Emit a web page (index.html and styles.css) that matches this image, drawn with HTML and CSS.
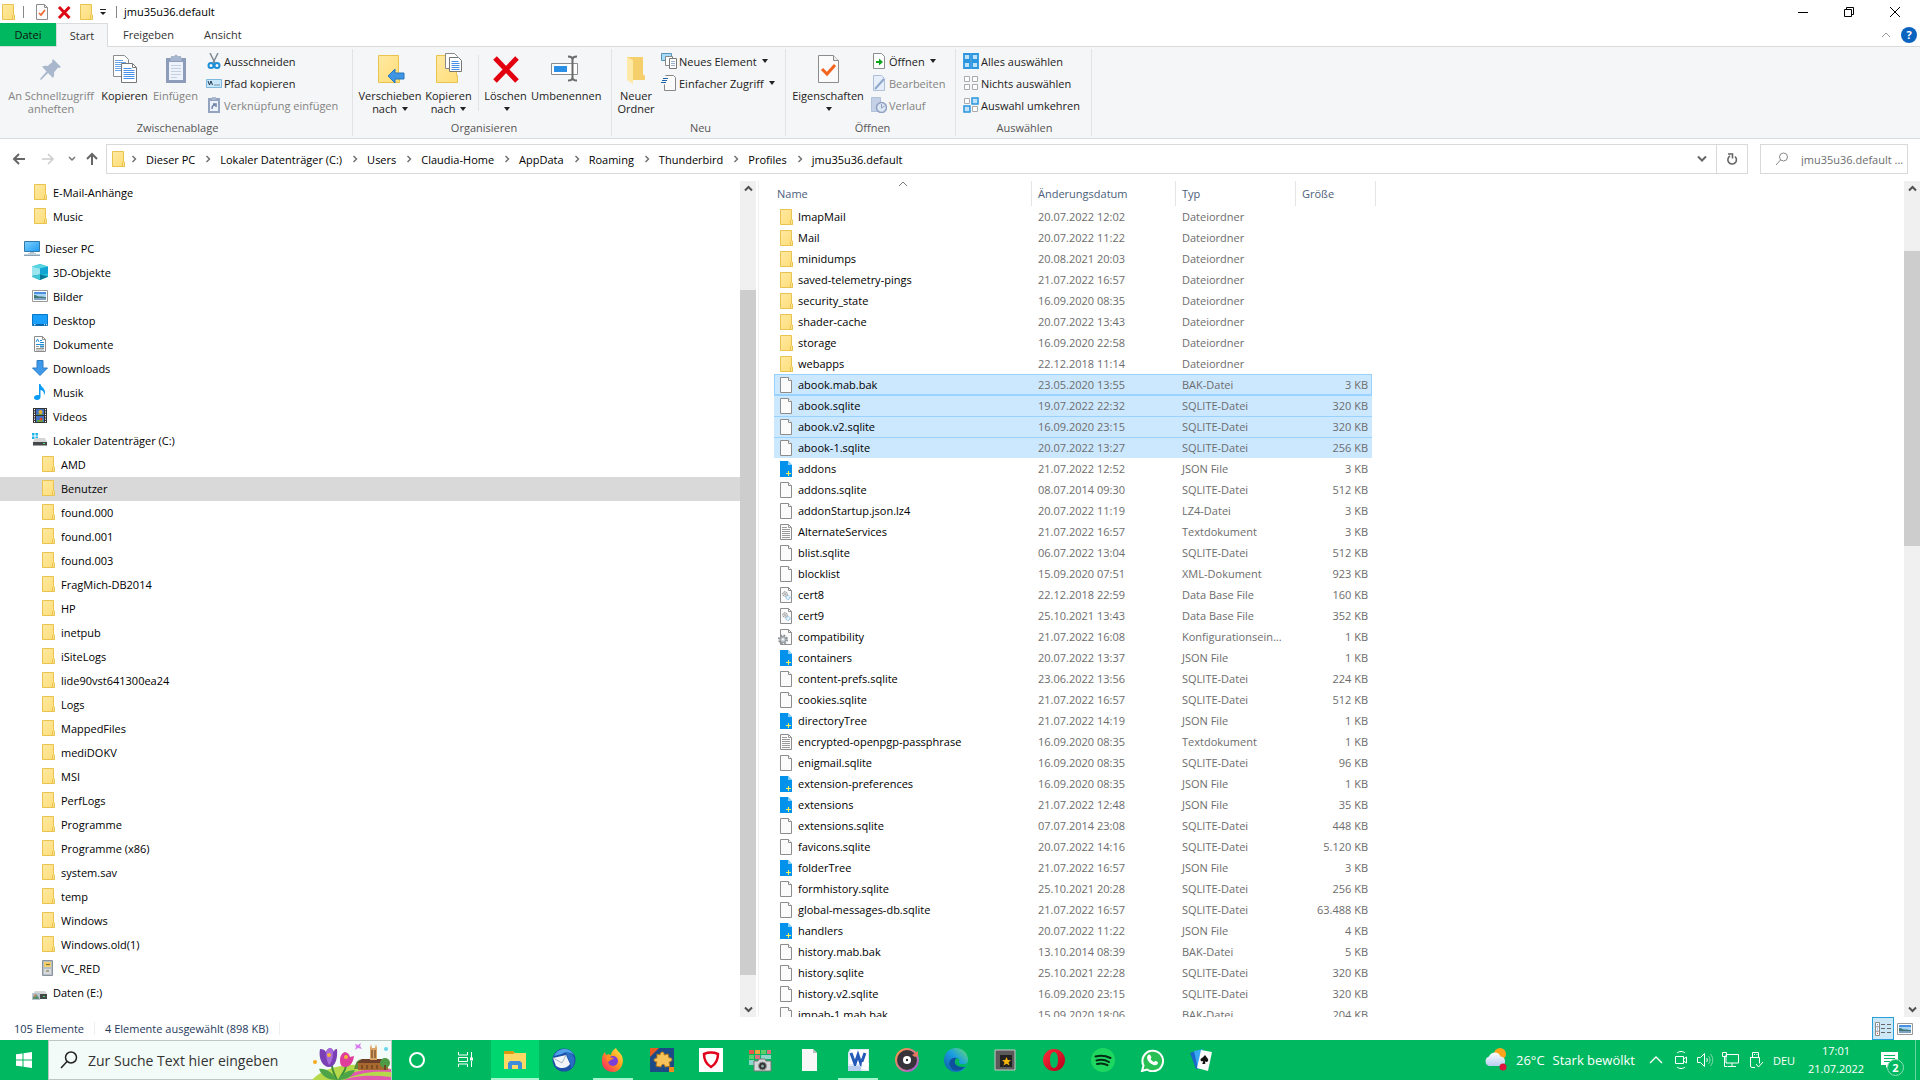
FILE: index.html
```html
<!DOCTYPE html>
<html lang="de">
<head>
  <meta charset="UTF-8">
  <meta name="viewport" content="width=device-width, initial-scale=1.0">
  <title>jmu35u36.default</title>
  <link rel="stylesheet" href="styles.css">
</head>
<body>

  <!-- Icon-Vorrat -->
  <svg class="vorrat" width="0" height="0" aria-hidden="true">
    <defs>
      <linearGradient id="gOrdner" x1="0" y1="0" x2="1" y2="1"><stop offset="0" stop-color="#ffe9a2"/><stop offset="1" stop-color="#ffdd78"/></linearGradient>
      <linearGradient id="gBlau" x1="0" y1="0" x2="1" y2="1"><stop offset="0" stop-color="#7fd0ff"/><stop offset="1" stop-color="#1e9cf5"/></linearGradient>
      <linearGradient id="gEdge" x1="0" y1="1" x2="1" y2="0"><stop offset="0" stop-color="#0c59a4"/><stop offset="0.55" stop-color="#1b9de2"/><stop offset="1" stop-color="#6be06a"/></linearGradient>
      <linearGradient id="gFox" x1="1" y1="0" x2="0" y2="1"><stop offset="0" stop-color="#fff14a"/><stop offset="0.45" stop-color="#ff9a1f"/><stop offset="1" stop-color="#f5156c"/></linearGradient>
      <linearGradient id="gDisc" x1="0" y1="0" x2="1" y2="1"><stop offset="0" stop-color="#ff9a3c"/><stop offset="1" stop-color="#a05adf"/></linearGradient>
      <linearGradient id="gOpera" x1="0" y1="0" x2="1" y2="1"><stop offset="0" stop-color="#ff2a3a"/><stop offset="1" stop-color="#b3001b"/></linearGradient>
      <linearGradient id="gWolke" x1="0" y1="0" x2="0" y2="1"><stop offset="0" stop-color="#ffffff"/><stop offset="1" stop-color="#b9cdf0"/></linearGradient>
    </defs>

    <symbol id="ordner" viewBox="0 0 16 16"><path d="M2.500.500h11v10.500h.9v4.500h-11.900z" fill="url(#gOrdner)" stroke="#e8c34f"/><path d="M12.500 15.500v-4.200l1-1 1 1v4.200z" fill="#ffe48d" stroke="#e8c34f"/></symbol>
    <symbol id="datei" viewBox="0 0 16 16"><path d="M2.500.500h8l3 3v12h-11z" fill="#fbfbfb" stroke="#8d8d8d"/><path d="M10.500.500v3h3" fill="#fff" stroke="#8d8d8d"/></symbol>
    <symbol id="text" viewBox="0 0 16 16"><path d="M2.500.500h8l3 3v12h-11z" fill="#fbfbfb" stroke="#8d8d8d"/><path d="M10.500.500v3h3M4 5.500h8M4 7.500h8M4 9.500h8M4 11.500h8M4 13.500h8M4 3.500h5" fill="none" stroke="#9b9b9b"/></symbol>
    <symbol id="json" viewBox="0 0 16 16"><path d="M2 0h8l4 4v12h-12z" fill="#0292ec"/><path d="M10 0v4h4z" fill="#8fd0f8"/><path d="M10.500 10v5M8 12.500h5" stroke="#fff35c" fill="none"/></symbol>
    <symbol id="db" viewBox="0 0 16 16"><path d="M2.500.500h8l3 3v12h-11z" fill="#fbfbfb" stroke="#8d8d8d"/><path d="M10.500.500v3h3" fill="none" stroke="#8d8d8d"/><circle cx="7" cy="7" r="2.300" fill="#e5e5e5" stroke="#888" stroke-dasharray="1.500 .6"/><circle cx="7" cy="7" r=".8" fill="#888"/><circle cx="10" cy="10.500" r="2" fill="#e1f2fd" stroke="#7fb8dc" stroke-dasharray="1.300 .5"/></symbol>
    <symbol id="konfig" viewBox="0 0 16 16"><path d="M2.500.500h8l3 3v12h-11z" fill="#fbfbfb" stroke="#8d8d8d"/><path d="M10.500.500v3h3" fill="none" stroke="#8d8d8d"/><circle cx="5" cy="10.500" r="4" fill="none" stroke="#8a9197" stroke-width="2" stroke-dasharray="1.800 1.340"/><circle cx="5" cy="10.500" r="3" fill="#c3c9cd" stroke="#8a9197"/><circle cx="5" cy="10.500" r="1" fill="#fff"/></symbol>
    <symbol id="pc" viewBox="0 0 16 16"><path d="M.500 1.500h15v10h-15z" fill="url(#gBlau)" stroke="#3579a8"/><path d="M6 12h4v1h2v.8H4V13h2z" fill="#a9c0d0"/><path d="M0 14.500h16v1.500H0z" fill="#8ba3b5"/></symbol>
    <symbol id="wuerfel" viewBox="0 0 16 16"><path d="M8 0l8 2.500v10.500l-8 3-8-3V2.500z" fill="#25c0d5"/><path d="M0 2.500l8 2v11.500l-8-3z" fill="#9be6ee"/><path d="M8 0l8 2.500-8 2-8-2z" fill="#58d4e3"/><path d="M8 4.500l8-2v7l-8 1.500z" fill="#12a5d3"/><path d="M0 12l8-1.500 8 2-8 3.500z" fill="#0a7594"/><path d="M0 12l8-1.500v5.500z" fill="#3fc9d7"/></symbol>
    <symbol id="bild" viewBox="0 0 16 16"><path d="M.500 2.500h15v11H.500z" fill="#fff" stroke="#999"/><path d="M2 4h12v8H2z" fill="#a9d3f7"/><path d="M2 4h12v2H2z" fill="#4a91e2"/><path d="M2 7c3 0 3 1.500 6 1.500s3 .5 6 .5v3H2z" fill="#417a76"/><path d="M2 10h12v2H2z" fill="#7ba2c2"/></symbol>
    <symbol id="desktop" viewBox="0 0 16 16"><path d="M.500 2.500h15v11H.500z" fill="#1aa0fb" stroke="#0778c8"/><path d="M1 12h14v1.500H1z" fill="#0b62ad"/><path d="M2 12.700h1.500M12 12.700h1M14 12.700h1" stroke="#fff"/></symbol>
    <symbol id="dokument" viewBox="0 0 16 16"><path d="M2.500.500h8l3 3v12h-11z" fill="#fff" stroke="#8d8d8d"/><path d="M10.500.500v3h3" fill="none" stroke="#8d8d8d"/><path d="M4 6l1.500-3L7 6M8 4.500h2M8 6.500h4M4 8.500h8" stroke="#1e90e0" fill="none"/><path d="M4 10.500h3M4 12.500h8M4 14h8" stroke="#999"/><path d="M8 9.500h4v2H8z" fill="#3a8fb7"/></symbol>
    <symbol id="download" viewBox="0 0 16 16"><path d="M5 .5h6v7.500h4.500L8 15.500.500 8H5z" fill="#3e9ae8" stroke="#2f7cc4"/></symbol>
    <symbol id="musik" viewBox="0 0 16 16"><path d="M7 0h1.500c.3 3 4.500 4 4.500 8 0 1.500-.5 2.500-1 3 .2-3-1-4.500-3.500-5v7c0 2-1.600 3-3.500 3s-3-1-3-2.400C2 12 3.500 11 5.500 11c.6 0 1 .1 1.500.3z" fill="#0a9bf5"/></symbol>
    <symbol id="video" viewBox="0 0 16 16"><path d="M1 0h14v15H1z" fill="#333"/><path d="M2.500 1v14M13.500 1v14" stroke="#fff" stroke-dasharray="1.200 1.200"/><path d="M4 1h8v6H4zM4 8h8v6H4z" fill="#3f71c8"/><circle cx="8.500" cy="4" r="2" fill="#e9b32c"/><path d="M5 6h6v1H5zM5 12h6v2H5z" fill="#6aa347"/><circle cx="9" cy="11" r="1.500" fill="#d84a2b"/></symbol>
    <symbol id="laufwerk" viewBox="0 0 16 16"><path d="M0 1h2.500v2.500H0zM3.500 1H6v2.500H3.500zM0 4.500h2.500V7H0zM3.500 4.500H6V7H3.500z" fill="#1ab2ea"/><path d="M3 6h10l2 4H1z" fill="#d4d6d8"/><path d="M1 10h14v3.500H1z" fill="#44484b"/><path d="M11 11.500h2" stroke="#4fe06a"/></symbol>
    <symbol id="daten" viewBox="0 0 16 16"><path d="M3 7h10l2 3H1z" fill="#d4d6d8"/><path d="M7 10h8v5H7z" fill="#44484b"/><path d="M0 9h8v7H0z" fill="#b9c6cf"/><path d="M1 13l3-3 3 4v1H1z" fill="#5b8c6f"/><circle cx="3" cy="11.500" r="1.300" fill="#c58f6b"/><path d="M11 12.500h2" stroke="#4fe06a"/></symbol>
    <symbol id="archiv" viewBox="0 0 16 16"><path d="M2.500.500h10v15h-10z" fill="#b7bec6" stroke="#8a929b"/><path d="M4 2h7v5H4z" fill="#f3cf68"/><path d="M4 9h7v5H4z" fill="#d5dade"/><path d="M6 4.500h4M6 11h3" stroke="#7c6a31"/></symbol>
    <symbol id="scroll-auf" viewBox="0 0 16 16"><path d="M5 9.500l3.500-3.500L12 9.500" fill="none" stroke="#505050" stroke-width="2"/></symbol>
    <symbol id="scroll-ab" viewBox="0 0 16 16"><path d="M5 6.500L8.500 10 12 6.500" fill="none" stroke="#505050" stroke-width="2"/></symbol>
    <symbol id="pfeil" viewBox="0 0 8 8"><path d="M2.500 1l3 3-3 3" fill="none" stroke="#6d6d6d" stroke-width="1.400"/></symbol>
  </svg>

  <!-- Titelleiste -->
  <header class="titelleiste">
    <svg class="icon"><use href="#ordner"/></svg>
    <span class="strich"></span>
    <button class="schnell" aria-label="Eigenschaften"><svg class="icon" viewBox="0 0 16 16"><path d="M2.500.500h8l3 3v12h-11z" fill="#fbfbfb" stroke="#8d8d8d"/><path d="M10.500.500v3h3" fill="none" stroke="#8d8d8d"/><path d="M5 9l2 2 4-5" fill="none" stroke="#f0642b" stroke-width="1.600"/></svg></button>
    <button class="schnell" aria-label="Löschen"><svg class="icon" viewBox="0 0 16 16"><path d="M3 3l10.500 11M13.500 3L3 14" stroke="#dc0a14" stroke-width="3"/></svg></button>
    <button class="schnell" aria-label="Neuer Ordner"><svg class="icon"><use href="#ordner"/></svg></button>
    <button class="schnell schmal" aria-label="Anpassen"><svg width="8" height="8"><path d="M1 1.500h6" stroke="#222"/><path d="M1 4h6L4 7z" fill="#222"/></svg></button>
    <span class="strich"></span>
    <h1>jmu35u36.default</h1>
    <div class="fenster">
      <button aria-label="Minimieren"><svg width="10" height="10"><path d="M0 5.500h10" stroke="#000"/></svg></button>
      <button aria-label="Verkleinern"><svg width="10" height="10"><path d="M.500 2.500h7v7h-7zM2.500 2.500v-2h7v7h-2" fill="none" stroke="#000"/></svg></button>
      <button aria-label="Schließen"><svg width="10" height="10"><path d="M0 0l10 10M10 0L0 10" stroke="#000"/></svg></button>
    </div>
  </header>

  <!-- Register -->
  <nav class="register">
    <button class="datei">Datei</button>
    <button class="aktiv">Start</button>
    <button>Freigeben</button>
    <button>Ansicht</button>
    <div class="hilfe">
      <svg width="10" height="10"><path d="M1 7l4-4 4 4" fill="none" stroke="#999"/></svg>
      <button aria-label="Hilfe">?</button>
    </div>
  </nav>

  <!-- Menüband -->
  <section class="band">
    <div class="gruppe ablage">
      <div class="inhalt">
        <button class="gross breit" disabled>
          <svg viewBox="0 0 32 32"><path d="M18 6l8 8-2 1-1-.5-4 5c.5 2 0 4-1 5.500l-5-5-7 7-1-1 6.500-7.500-4.500-5c2-1 4-1 5.500-.5l5-4-.5-1z" fill="#a9b8cc"/></svg>
          An Schnellzugriff<br>anheften
        </button>
        <button class="gross">
          <svg viewBox="0 0 32 32"><path d="M4.500 2.500h11l4 4v17h-15z" fill="#fff" stroke="#8c8c8c"/><path d="M6 7.500h8M6 9.500h11M6 11.500h11M6 13.500h6M6 15.500h6M6 17.500h6" stroke="#6aa5ea"/><path d="M12.500 10.500h11l4 4v15h-15z" fill="#fff" stroke="#777"/><path d="M23.500 10.500v4h4" fill="none" stroke="#777"/><path d="M14.500 15.500h8M14.500 17.500h11M14.500 19.500h11M14.500 21.500h11M14.500 23.500h11M14.500 25.500h11" stroke="#4a90e8"/></svg>
          Kopieren
        </button>
        <button class="gross" disabled>
          <svg viewBox="0 0 32 32"><path d="M6 5h20v25H6z" fill="#8c9cba"/><path d="M9 9h14v18H9z" fill="#eef3fb"/><path d="M11 3h3.500a1.500 1.500 0 013 0H21l1 5H10z" fill="#a6b4cd"/><path d="M11 12.500h10M11 15.500h10M11 18.500h10M11 21.500h10M11 24.500h6" stroke="#c3cfe3"/></svg>
          Einfügen
        </button>
        <div class="spalte">
          <button class="klein"><svg class="icon" viewBox="0 0 16 16"><path d="M4 0l5 10M12 0L7 10" stroke="#7d8a96" stroke-width="1.500"/><circle cx="5" cy="12.500" r="2.500" fill="none" stroke="#1d8fd8" stroke-width="2"/><circle cx="11" cy="12.500" r="2.500" fill="none" stroke="#1d8fd8" stroke-width="2"/></svg>Ausschneiden</button>
          <button class="klein"><svg class="icon" viewBox="0 0 16 16"><path d="M.500 4.500h15v8H.500z" fill="#c9e7fb" stroke="#7db8de"/><path d="M2 6l1.500 4L5 6l1.500 4M8.500 10h1M10.500 10h1M12.500 10h1" stroke="#23384c" fill="none"/></svg>Pfad kopieren</button>
          <button class="klein" disabled><svg class="icon" viewBox="0 0 16 16"><path d="M2 1h12v15H2z" fill="#93a3c0"/><path d="M4 4h8v10H4z" fill="#edf2fa"/><path d="M6 0h4v3H6z" fill="#a9b7cf"/><path d="M6 12c0-3 1-4 3-4M7 7h3v3" stroke="#6d82a8" stroke-width="1.500" fill="none"/></svg>Verknüpfung einfügen</button>
        </div>
      </div>
      <p>Zwischenablage</p>
    </div>

    <div class="gruppe organisieren">
      <div class="inhalt">
        <button class="gross mittel">
          <svg viewBox="0 0 32 32"><path d="M4.500 2.500h20v20h1v7h-21z" fill="url(#gOrdner)" stroke="#e8c34f"/><path d="M14 23l7-7v4h9v6h-9v4z" fill="#3e96e4" stroke="#2674bd"/></svg>
          Verschieben<br>nach <i class="dreieck"></i>
        </button>
        <button class="gross">
          <svg viewBox="0 0 32 32"><path d="M3.500 2.500h20v20h1v7h-21z" fill="url(#gOrdner)" stroke="#e8c34f"/><path d="M12.500.500h9l3 3v12h-12z" fill="#fff" stroke="#888"/><path d="M16.500 4.500h9l3 3v11h-12z" fill="#fff" stroke="#777"/><path d="M18.500 8.500h7M18.500 10.500h8M18.500 12.500h8M18.500 14.500h8M18.500 16.500h8" stroke="#4a90e8"/></svg>
          Kopieren<br>nach <i class="dreieck"></i>
        </button>
        <span class="trenner"></span>
        <button class="gross">
          <svg viewBox="0 0 32 32"><path d="M5 5l22 23M27 5L5 28" stroke="#e3000f" stroke-width="5"/></svg>
          Löschen<br><i class="dreieck"></i>
        </button>
        <button class="gross mittel">
          <svg viewBox="0 0 32 32"><path d="M3.500 10.500h26v11h-26z" fill="#fff" stroke="#8c8c8c"/><path d="M6 13h13v6H6z" fill="#2b8fe6"/><path d="M20 3.500c3 0 4.500 1 4.500 3v18c0 2-1.500 3-4.500 3M29 3.500c-3 0-4.500 1-4.500 3v18c0 2 1.500 3 4.500 3" fill="none" stroke="#6b6b6b" stroke-width="2"/></svg>
          Umbenennen
        </button>
      </div>
      <p>Organisieren</p>
    </div>

    <div class="gruppe neu">
      <div class="inhalt">
        <button class="gross schlank">
          <svg viewBox="0 0 32 32"><path d="M7 4h16v17l2 2v4H7z" fill="#f6cf6d"/><path d="M7 4l6 3v24l-6-4z" fill="#ffe9a6"/></svg>
          Neuer<br>Ordner
        </button>
        <div class="spalte">
          <button class="klein"><svg class="icon" viewBox="0 0 16 16"><path d="M.500.500h10v7H.500z" fill="#a8dbf7" stroke="#5a93b5"/><path d="M4.500 3.500h7v9h-7z" fill="#fff" stroke="#888"/><path d="M8.500 5.500h7v10h-7z" fill="#fff" stroke="#777"/><path d="M10 8.500h4M10 10.500h4M10 12.500h4" stroke="#9aaed0"/></svg>Neues Element <i class="dreieck"></i></button>
          <button class="klein"><svg class="icon" viewBox="0 0 16 16"><path d="M4.500.500h8l2 2v13h-11v-6" fill="#fbfbfb" stroke="#888"/><path d="M2 3.500h5M1 5.500h5M0 7.500h5" stroke="#1d66ad"/></svg>Einfacher Zugriff <i class="dreieck"></i></button>
        </div>
      </div>
      <p>Neu</p>
    </div>

    <div class="gruppe oeffnen">
      <div class="inhalt">
        <button class="gross mittel">
          <svg viewBox="0 0 32 32"><path d="M6.500 2.500h15l5 5v22h-20z" fill="#fbfbfb" stroke="#8c8c8c"/><path d="M21.500 2.500v5h5" fill="#eee" stroke="#8c8c8c"/><path d="M10 16l5 5 8-9" fill="none" stroke="#f4641e" stroke-width="3"/></svg>
          Eigenschaften<br><i class="dreieck"></i>
        </button>
        <div class="spalte">
          <button class="klein"><svg class="icon" viewBox="0 0 16 16"><path d="M2.500.500h8l3 3v12h-11z" fill="#fff" stroke="#8d8d8d"/><path d="M5 8h3V5.500L12 9l-4 3.500V10H5z" fill="#10a51f"/></svg>Öffnen <i class="dreieck"></i></button>
          <button class="klein" disabled><svg class="icon" viewBox="0 0 16 16"><path d="M2.500.500h8l3 3v12h-11z" fill="#e6eef9" stroke="#aebfd9"/><path d="M4 14l9-10" stroke="#8fa7cc" stroke-width="2"/></svg>Bearbeiten</button>
          <button class="klein" disabled><svg class="icon" viewBox="0 0 16 16"><path d="M.500.500h9v14h-9z" fill="#c3d0e6" stroke="#b3c2db"/><circle cx="10.500" cy="10.500" r="5" fill="#dde6f3" stroke="#8fa0c0" stroke-width="1.500"/><path d="M10.500 7v4l3-2" fill="none" stroke="#8fa0c0"/></svg>Verlauf</button>
        </div>
      </div>
      <p>Öffnen</p>
    </div>

    <div class="gruppe auswaehlen">
      <div class="inhalt">
        <div class="spalte">
          <button class="klein"><svg class="icon" viewBox="0 0 16 16"><path d="M1 1h6v6H1zM9 1h6v6H9zM1 9h6v6H1zM9 9h6v6H9z" fill="#bfe3fb" stroke="#2b95e0" stroke-width="1.800"/></svg>Alles auswählen</button>
          <button class="klein"><svg class="icon" viewBox="0 0 16 16"><path d="M1.500 1.500h5v5h-5zM9.500 1.500h5v5h-5zM1.500 9.500h5v5h-5zM9.500 9.500h5v5h-5z" fill="#fff" stroke="#aaa"/></svg>Nichts auswählen</button>
          <button class="klein"><svg class="icon" viewBox="0 0 16 16"><path d="M1.500 1.500h5v5h-5zM9.500 9.500h5v5h-5z" fill="#fff" stroke="#aaa"/><path d="M9 1h6v6H9zM1 9h6v6H1z" fill="#bfe3fb" stroke="#2b95e0" stroke-width="1.500"/></svg>Auswahl umkehren</button>
        </div>
      </div>
      <p>Auswählen</p>
    </div>
  </section>

  <!-- Adressleiste -->
  <div class="adresse">
    <div class="richtung">
      <button aria-label="Zurück"><svg width="14" height="14"><path d="M13 7H2M7 2L2 7l5 5" fill="none" stroke="#666" stroke-width="2"/></svg></button>
      <button aria-label="Vorwärts" disabled><svg width="14" height="14"><path d="M1 7h11M7 2l5 5-5 5" fill="none" stroke="#ccc" stroke-width="1.500"/></svg></button>
      <button class="schmal" aria-label="Verlauf"><svg width="8" height="8"><path d="M1 2l3 3 3-3" fill="none" stroke="#777" stroke-width="1.500"/></svg></button>
      <button class="schmal" aria-label="Nach oben"><svg width="14" height="14"><path d="M7 13V2M2 7l5-5 5 5" fill="none" stroke="#666" stroke-width="2"/></svg></button>
    </div>
    <div class="pfad">
      <svg class="icon"><use href="#ordner"/></svg>
      <ol id="pfad"></ol>
      <button aria-label="Frühere Orte"><svg width="10" height="8"><path d="M1 1.500l4 4 4-4" fill="none" stroke="#666" stroke-width="2"/></svg></button>
      <button class="neuladen" aria-label="Aktualisieren"><svg width="12" height="13"><path d="M9 3.500a4.300 4.300 0 11-5-.5" fill="none" stroke="#666" stroke-width="1.600"/><path d="M2 1h4.500v4.500" fill="none" stroke="#666" stroke-width="1.600"/></svg></button>
    </div>
    <label class="suche">
      <svg width="14" height="14"><circle cx="8.500" cy="5" r="4" fill="none" stroke="#888"/><path d="M5.500 8L1 13" stroke="#888"/></svg>
      <input type="text" placeholder="jmu35u36.default ..." aria-label="Durchsuchen">
    </label>
  </div>

  <!-- Ordnerbaum und Dateiliste -->
  <main class="ansicht">
    <ul class="baum" id="baum"></ul>
    <div class="leiste leiste-baum">
      <svg class="icon"><use href="#scroll-auf"/></svg>
      <div class="vor"></div><div class="griff"></div><div class="nach"></div>
      <svg class="icon"><use href="#scroll-ab"/></svg>
    </div>

    <div class="liste">
      <table>
        <thead>
          <tr>
            <th class="name">Name<svg class="sortierung" width="10" height="6"><path d="M1 5l4-4 4 4" fill="none" stroke="#777"/></svg></th>
            <th class="datum">Änderungsdatum</th>
            <th class="typ">Typ</th>
            <th class="groesse">Größe</th>
          </tr>
        </thead>
        <tbody id="dateien"></tbody>
      </table>
    </div>
    <div class="leiste leiste-liste">
      <svg class="icon"><use href="#scroll-auf"/></svg>
      <div class="vor"></div><div class="griff"></div><div class="nach"></div>
      <svg class="icon"><use href="#scroll-ab"/></svg>
    </div>
  </main>

  <!-- Statusleiste -->
  <div class="status">
    <span>105 Elemente</span>
    <span>4 Elemente ausgewählt (898 KB)</span>
    <div class="darstellung">
      <button class="an" aria-label="Details"><svg width="16" height="14"><path d="M.500.500h4v13h-4zM.500 4.800h4M.500 9.200h4" fill="#fff" stroke="#8a8a8a"/><path d="M2 2.700h1M2 7h1" stroke="#2b7fd0"/><path d="M2 11.300h1" stroke="#e02020"/><path d="M6 2.500h4M12 2.500h4M6 6.500h4M12 6.500h4M6 10.500h4M12 10.500h4" stroke="#666"/></svg></button>
      <button aria-label="Große Symbole"><svg class="icon"><use href="#bild"/></svg></button>
    </div>
  </div>

  <!-- Taskleiste -->
  <footer class="taskleiste">
    <button class="start" aria-label="Start"><svg width="16" height="16"><path d="M0 2.300L6.500 1.400v6.100H0zM7.500 1.200L16 0v7.500H7.500zM0 8.500h6.500v6.100L0 13.700zM7.500 8.500H16V16l-8.500-1.200z" fill="#fff"/></svg></button>
    <label class="tasksuche">
      <svg width="18" height="18"><circle cx="11" cy="6.500" r="5.500" fill="none" stroke="#222" stroke-width="1.500"/><path d="M7 10.500L1 17" stroke="#222" stroke-width="1.500"/></svg>
      <input type="text" placeholder="Zur Suche Text hier eingeben" aria-label="Suche">
      <svg class="blumen" viewBox="0 0 79 39">
        <path d="M0 39c8-9 22-14 38-15 16-1 30 1 41 4v11z" fill="#b6d94c"/>
        <path d="M34 34c12-5 28-7 45-6v3c-16-1-28 0-40 5zM32 39c12-5 30-5 47-3v3z" fill="#e05bb0"/>
        <path d="M44 22c4-6 10-4 12 1v5H42z" fill="#5e8a3c"/>
        <path d="M46 29v-7l4-4h20l6 4v7z" fill="#a8692f"/><path d="M45 22l5-4h20l7 4z" fill="#6d3f2b"/><path d="M58 19V7l1-4 1 4h3l1-4 1 4v12z" fill="#d9a465"/>
        <path d="M60 9v8M63 9v8M50 24v4M55 24v4M60 24v4M65 24v4" stroke="#5a331c"/>
        <circle cx="73" cy="22" r="5" fill="#4f9b45"/><path d="M73 24v5" stroke="#70452b" stroke-width="2"/>
        <path d="M20 24c0 6 3 10 5 15M34 24c0 6-5 10-7 15" stroke="#3e8f3a" stroke-width="2" fill="none"/>
        <path d="M7 28c7-1 14 4 18 11-8 0-15-3-18-11zM43 29c-7 0-14 4-17 10 8 0 14-3 17-10z" fill="#4ea547"/>
        <path d="M8 8c3 0 5 1 6 3 1-3 3-4 4-4s3 1 4 4c0-2 1-3 3-3 1 10-2 18-8 18S6 18 8 8z" fill="#7a3fb5"/><path d="M14 11c1-3 3-4 4-4s3 1 3 5c0 6-2 10-4 12-2-3-3-8-3-13z" fill="#a86bd9"/>
        <circle cx="17" cy="14" r="2" fill="#f5b33d"/>
        <path d="M28 19c0-4 2-7 5-8 3 1 4 2 5 5l4-1c-1 7-4 11-9 11-4 0-5-3-5-7z" fill="#df3d9b"/><circle cx="34" cy="16" r="2" fill="#f5b33d"/>
        <path d="M43 3l3 1 3-2-1 3 2 3-4-1-3 2 1-3z" fill="#d980f0"/><circle cx="74" cy="8" r="2" fill="#67d4e8"/><circle cx="3" cy="21" r="2" fill="#f5ab1d"/>
      </svg>
    </label>

    <div class="apps">
      <button aria-label="Cortana"><svg viewBox="0 0 24 24"><circle cx="12" cy="12" r="7" fill="none" stroke="#fff" stroke-width="2"/></svg></button>
      <button aria-label="Aktive Anwendungen"><svg viewBox="0 0 24 24"><path d="M4.500 4v3h9V4M4.500 19v-3h9v3M4.500 9.500h9v4h-9zM17.500 4v6M17.500 13v6" fill="none" stroke="#fff"/><path d="M16 9.500h3v3h-3z" fill="#fff"/></svg></button>
      <button class="offen vorn" aria-label="Explorer"><svg viewBox="0 0 24 24"><path d="M1 3h9l2 2h11v16H1z" fill="#ffd765"/><path d="M1 3h9l2 2-2 1H1z" fill="#d99a13"/><path d="M5 21v-6l2-2h10l2 2v6h-4v-4H9v4z" fill="#3f8edc"/></svg></button>
      <button aria-label="Thunderbird"><svg viewBox="0 0 24 24"><circle cx="12" cy="12" r="11.500" fill="#1c4fa8"/><path d="M2 8C6-1 18-1 22 7c-4-3-9-3-12-1z" fill="#4fa0e8"/><path d="M1 10l13-3 4 9c-3 5-10 5-14 2z" fill="#f1f4f8"/><path d="M1 10l9 5 4-8" fill="none" stroke="#aab6c6"/><path d="M13 4c10 0 12 10 6 17 0-6-2-10-6-17z" fill="#2b6fc4"/></svg></button>
      <button class="offen" aria-label="Firefox"><svg viewBox="0 0 24 24"><path d="M15 0c1 3 4 4 6 8 3 8-2 16-9 16S0 19 1 11c0-3 1-5 3-7l1 3c2-1 3-1 5 0 0-3 2-5 5-7z" fill="url(#gFox)"/><circle cx="12" cy="13" r="5" fill="#7a3fd9"/><path d="M5 9c4-1 5 1 8 1-1 2-4 1-5 4-2-1-3-3-3-5z" fill="#ff8a1d"/></svg></button>
      <button aria-label="Puzzle"><svg viewBox="0 0 24 24"><path d="M0 0h24v24H0z" fill="#1c4a86"/><path d="M0 0h9L0 9z" fill="#e85c24"/><path d="M7 6l3 1c0-4 5-4 4 0l4-1 1 4c4-1 4 4 0 4l1 4-5 1c0-4-4-3-4 0l-5-1 1-4c-4 0-4-4 0-4z" fill="#f5c35a" stroke="#b9791a"/><path d="M19 19h5v5h-5z" fill="#f08a1b"/></svg></button>
      <button aria-label="Sicherheit"><svg viewBox="0 0 24 24"><path d="M0 0h24v24H0z" fill="#fff"/><path d="M5 6c5-2 9-2 14 0 0 6-2 10-7 13-5-3-7-7-7-13z" fill="none" stroke="#e3001b" stroke-width="2.500"/></svg></button>
      <button aria-label="Bildschirmfoto"><svg viewBox="0 0 24 24"><path d="M1 2h5v4H1z" fill="#e8584a"/><path d="M7 2h5v4H7z" fill="#f0a03c"/><path d="M13 2h5v4h-5zM1 7h5v4H1z" fill="#5ed06b"/><path d="M19 2h4v4h-4zM7 7h5v4H7z" fill="#e0707f"/><path d="M13 7h10v4H13zM1 12h5v5H1z" fill="#8fd4c9"/><path d="M6 13h4l1-2h6l1 2h5v10H6z" fill="#d6d9db" stroke="#777"/><circle cx="14.500" cy="18" r="4" fill="#333" stroke="#999"/><circle cx="14.500" cy="18" r="1.500" fill="#8aa"/></svg></button>
      <button aria-label="Dokument"><svg viewBox="0 0 24 24"><path d="M5 1h11l4 4v18H5z" fill="#f7f7f7"/><path d="M16 1v4h4z" fill="#bbb"/></svg></button>
      <button class="offen" aria-label="Word"><svg viewBox="0 0 24 24"><path d="M4 1h19v22H2V5z" fill="#dfe9f8"/><path d="M5 2h17v14H3z" fill="#fff"/><path d="M5 5l4 11 3-9 3 9L19 5" fill="none" stroke="#2459b8" stroke-width="3"/><path d="M16 14l7 1-1 7-7-1z" fill="#fff"/><path d="M2 18h13v5H2z" fill="#b8cdee"/></svg></button>
      <button aria-label="Musikspieler"><svg viewBox="0 0 24 24"><circle cx="12" cy="12" r="11" fill="#36333b" stroke="url(#gDisc)" stroke-width="2"/><circle cx="12" cy="12" r="4" fill="#fff"/><circle cx="12" cy="12" r="1.200" fill="#333"/><path d="M17 7l6-4v5l-3 1z" fill="#e5785c"/></svg></button>
      <button aria-label="Edge"><svg viewBox="0 0 24 24"><circle cx="12" cy="12" r="12" fill="url(#gEdge)"/><path d="M9 22C2 16 6 8 13 10c-5 4-1 9 9 8-3 4-8 6-13 4z" fill="#0e4f9e"/><path d="M13 10c2 0 3 2 2 4 1 3 6 3 9 0-1 3-2 4-3 5-9 1-13-5-8-9z" fill="#00b85f"/></svg></button>
      <button aria-label="Tresor"><svg viewBox="0 0 24 24"><path d="M2 2h20v20H2z" fill="#5a5a5a" stroke="#c9c9c9"/><path d="M7 7h12v12H7z" fill="#222"/><path d="M13.500 9l1.300 3 3.200.2-2.500 2.100 1 3.200-3-1.800-3 1.800 1-3.200L9 12.200l3.200-.2z" fill="#f7b50c"/></svg></button>
      <button aria-label="Opera"><svg viewBox="0 0 24 24"><path d="M12 1a11 11 0 100 22 11 11 0 100-22zm0 3c3 0 4 4 4 8s-1 8-4 8-4-4-4-8 1-8 4-8z" fill="url(#gOpera)" fill-rule="evenodd"/></svg></button>
      <button aria-label="Spotify"><svg viewBox="0 0 24 24"><circle cx="12" cy="12" r="12" fill="#1ed760"/><path d="M4.500 8.500c5-1.500 10-1 15 1.500M5.500 12.500c4-1.200 8.500-.8 12.500 1.500M6 16c4-1 7.500-.5 10.500 1.200" fill="none" stroke="#062b14" stroke-width="2" stroke-linecap="round"/></svg></button>
      <button aria-label="WhatsApp"><svg viewBox="0 0 24 24"><path d="M2 23l1.500-5.500A10.300 10.300 0 117 21.500z" fill="#28c055" stroke="#fff" stroke-width="2"/><path d="M8 7l2-.5 1.500 3-1 1.500c1 1.500 2 2.300 3.500 3l1.500-1.300 2.500 1.500c0 2-1.500 3-3 3-4-.5-8-4.500-8-8z" fill="#fff"/></svg></button>
      <button aria-label="Solitär"><svg viewBox="0 0 24 24"><path d="M1 5l9-3 5 17-8 2z" fill="#1b66c8"/><path d="M5 3l9-2 4 18-9 2z" fill="#38a8f0"/><path d="M12 2l11 2-4 19-11-3z" fill="#fafafa"/><path d="M16 7c2 3 4 4 3 6-.7 1.300-2.300 1-3 .3l.3 2.700h-3l1-3c-1 .6-2.800.3-2.800-1.200C11.500 10 14.500 9.500 16 7z" fill="#111"/></svg></button>
    </div>

    <div class="ablagebereich">
      <button class="wetter">
        <svg viewBox="0 0 24 24"><circle cx="16" cy="6" r="6" fill="#ffa41b"/><path d="M5 18a5 5 0 010-9.500C7 3 15 3 16.500 8.500 22 8 23 18 17 18z" fill="url(#gWolke)"/><circle cx="19" cy="19" r="3.500" fill="#dc143c"/></svg>
        <span>26°C</span><span>Stark bewölkt</span>
      </button>
      <button aria-label="Ausgeblendete Symbole"><svg width="14" height="8"><path d="M1 7l6-6 6 6" fill="none" stroke="#fff" stroke-width="1.400"/></svg></button>
      <button aria-label="Besprechung"><svg width="14" height="18"><path d="M1.500 5.500h8v7h-8zM9.500 8l3-2v6l-3-2M3 2c2-2 6-2 8 0M3 16c2 2 6 2 8 0" fill="none" stroke="#fff"/></svg></button>
      <button aria-label="Lautsprecher"><svg width="17" height="16"><path d="M.500 5.500h3l4-4v13l-4-4h-3z" fill="none" stroke="#fff"/><path d="M9.500 6c1 1 1 3 0 4" fill="none" stroke="#fff"/><path d="M11.500 4c2 2.500 2 5.500 0 8M13.500 2c3 4 3 8 0 12" fill="none" stroke="#7fdbae"/></svg></button>
      <button aria-label="Netzwerk"><svg width="17" height="16"><path d="M4 2.500h12.500v8.500H4zM10 11v3M6 14.500h8M.500.500h4v4h-4zM2.500 4.500v10h3" fill="none" stroke="#fff"/></svg></button>
      <button aria-label="USB"><svg width="14" height="18"><path d="M3.500 6V1.500h6V6M1.500 6.500h9v6M1.500 6v9q0 1.500 1.500 1.500h3" fill="none" stroke="#fff"/><path d="M5 3.500h1M7.500 3.500h1M7 13l2.500 3L14 11" fill="none" stroke="#fff"/></svg></button>
      <button class="sprache">DEU</button>
      <button class="uhr">17:01<br>21.07.2022</button>
      <button class="info" aria-label="Benachrichtigungen"><svg width="17" height="16"><path d="M0 0h17v13H8l-3 3v-3H0z" fill="#fff"/><path d="M3 3.500h11M3 6.500h11M3 9.500h8" stroke="#00b85f"/></svg><b>2</b></button>
    </div>
  </footer>

  <script src="script.js"></script>
</body>
</html>
```

FILE: styles.css
```css
* {
  box-sizing: border-box;
}

body {
  font-family: 'Open Sans', 'Noto Sans', sans-serif;
  font-size: 11px;
  line-height: 13px;
  color: #000;
  background-color: #fff;
  margin: 0;
  height: 100vh;
  display: flex;
  flex-direction: column;
  overflow: hidden;
}

button {
  font: inherit;
  color: inherit;
  background: none;
  border: none;
  padding: 0;
}

input {
  font: inherit;
  border: none;
  background: none;
  outline: none;
  padding: 0;
  min-width: 0;
  flex: 1;
}

ul, ol {
  list-style: none;
  margin: 0;
  padding: 0;
}

svg {
  display: block;
  flex: none;
}

.vorrat {
  position: absolute;
}

.icon {
  width: 16px;
  height: 16px;
}

.dreieck {
  display: inline-block;
  border: 3px solid transparent;
  border-top: 4px solid #222;
  border-bottom: none;
  margin-left: 2px;
  vertical-align: 2px;
}

/* Titelleiste */
.titelleiste {
  flex: none;
  display: flex;
  align-items: center;
  height: 23px;
}

.strich {
  width: 1px;
  height: 12px;
  background-color: #888;
  margin: 0 7px;
}

.schnell {
  width: 22px;
  display: flex;
  justify-content: center;
}

.schnell.schmal {
  width: 12px;
}

.titelleiste h1 {
  font-size: 11px;
  font-weight: normal;
  margin: 0;
  flex: 1;
}

.fenster {
  display: flex;
  padding-right: 2px;
}

.fenster button {
  width: 46px;
  height: 20px;
  display: flex;
  justify-content: center;
  align-items: center;
}

/* Register */
.register {
  flex: none;
  display: flex;
  height: 24px;
  border-bottom: 1px solid #dadbdc;
}

.register > button {
  padding: 0 15px;
  color: #333;
}

.register .datei {
  width: 56px;
  padding: 0;
  background-color: #00b85f;
  color: #111;
}

.register .aktiv {
  width: 52px;
  padding: 0;
  margin-bottom: -1px;
  background-color: #f5f6f7;
  border: 1px solid #dadbdc;
  border-bottom: none;
}

.hilfe {
  display: flex;
  align-items: center;
  gap: 10px;
  margin-left: auto;
  padding-right: 3px;
}

.hilfe button {
  width: 16px;
  height: 16px;
  border-radius: 50%;
  background-color: #0b63c0;
  color: #fff;
  font-weight: bold;
}

/* Menüband */
.band {
  flex: none;
  display: flex;
  height: 92px;
  padding: 2px 0;
  background-color: #f5f6f7;
  border-bottom: 1px solid #dadbdc;
  color: #222;
}

.gruppe {
  display: flex;
  flex-direction: column;
  border-right: 1px solid #e2e3e4;
}

.ablage { width: 353px; padding-left: 3px; }
.organisieren { width: 259px; padding-left: 4px; }
.neu { width: 174px; padding-left: 4px; }
.oeffnen { width: 170px; padding-left: 4px; }
.auswaehlen { width: 136px; padding-left: 2px; }

.inhalt {
  flex: 1;
  display: flex;
  align-items: flex-start;
  padding-top: 4px;
}

.gruppe p {
  margin: 0;
  height: 15px;
  text-align: center;
  color: #555;
}

.gross {
  width: 51px;
  text-align: center;
  white-space: nowrap;
}

.gross svg {
  width: 32px;
  height: 32px;
  margin: 0 auto 4px;
}

.gross.breit { width: 96px; }
.gross.mittel { width: 76px; }
.gross.schlank { width: 40px; }

.organisieren .mittel {
  width: 66px;
}

.trenner {
  width: 1px;
  height: 56px;
  margin: 2px 1px 0 4px;
  background-color: #e2e3e4;
}

.spalte {
  display: flex;
  flex-direction: column;
  margin-top: -3px;
  padding-left: 5px;
}

.klein {
  display: flex;
  align-items: center;
  gap: 2px;
  height: 22px;
  white-space: nowrap;
}

.klein .dreieck {
  margin-left: 3px;
}

.band button:disabled {
  color: #838383;
}

/* Adressleiste */
.adresse {
  flex: none;
  display: flex;
  height: 42px;
  padding: 5px 12px 7px 4px;
}

.richtung {
  display: flex;
  width: 102px;
}

.richtung button {
  width: 29px;
  display: flex;
  align-items: center;
  justify-content: center;
}

.richtung .schmal {
  width: 20px;
}

.pfad {
  flex: 1;
  display: flex;
  align-items: center;
  border: 1px solid #d9d9d9;
  padding-left: 3px;
}

.pfad ol {
  flex: 1;
  display: flex;
  align-items: center;
  margin-left: -5px;
}

.pfad li {
  display: flex;
  align-items: center;
}

.pfad li svg {
  margin: 0 8px 0 9px;
}

.pfad a {
  color: #000;
  text-decoration: none;
}

.pfad button {
  width: 28px;
  height: 100%;
  display: flex;
  align-items: center;
  justify-content: center;
}

.pfad .neuladen {
  width: 31px;
  border-left: 1px solid #d9d9d9;
}

.suche {
  width: 148px;
  margin-left: 12px;
  border: 1px solid #d9d9d9;
  display: flex;
  align-items: center;
  gap: 12px;
  padding-left: 14px;
}

.suche input::placeholder {
  color: #6d6d6d;
}

/* Ordnerbaum */
.ansicht {
  flex: 1;
  min-height: 0;
  display: flex;
}

.baum {
  width: 740px;
  overflow: hidden;
}

.baum li {
  display: flex;
  align-items: center;
  gap: 5px;
  height: 24px;
  padding: 0 0 2px 32px;
}

.baum .wurzel {
  margin-top: 8px;
  padding-left: 24px;
}

.baum .tief {
  padding-left: 40px;
}

.baum .markiert {
  background-color: #d9d9d9;
}

.leiste {
  width: 16px;
  display: flex;
  flex-direction: column;
  background-color: #f0f0f0;
}

.griff {
  background-color: #cdcdcd;
}

.leiste-baum .vor { flex: 93; }
.leiste-baum .griff { flex: 685; }
.leiste-baum .nach { flex: 26; }
.leiste-liste .vor { flex: 54; }
.leiste-liste .griff { flex: 295; }
.leiste-liste .nach { flex: 455; }

/* Dateiliste */
.liste {
  flex: 1;
  overflow: hidden;
  margin-left: 2px;
  padding-left: 15px;
  border-left: 1px solid #f0f0f0;
}

table {
  width: 598px;
  table-layout: fixed;
  border-spacing: 0;
}

th {
  position: relative;
  height: 25px;
  padding: 0 0 0 6px;
  text-align: left;
  font-weight: normal;
  color: #4c607a;
}

th::after {
  content: "";
  position: absolute;
  top: 0;
  right: 0;
  width: 1px;
  height: 25px;
  background-color: #e5e5e5;
}

th.name { width: 258px; padding-left: 3px; }
th.datum { width: 144px; }
th.typ { width: 120px; }
th.groesse { width: 76px; }

th.groesse::after {
  right: -4px;
}

.sortierung {
  position: absolute;
  top: 0;
  left: calc(50% - 5px);
}

td {
  height: 21px;
  padding: 0 0 0 6px;
  color: #6d6d6d;
  white-space: nowrap;
}

td.eintrag {
  display: flex;
  align-items: center;
  gap: 4px;
  padding-left: 4px;
  color: #000;
}

td.menge {
  text-align: right;
  padding-right: 4px;
}

tr.gewaehlt {
  background-color: #cce8ff;
  box-shadow: inset 0 1px #99d1ff;
}

tr.fokus {
  box-shadow: inset 0 0 0 1px #99d1ff;
}

/* Statusleiste */
.status {
  flex: none;
  display: flex;
  align-items: center;
  height: 23px;
  padding: 0 5px 0 4px;
  color: #1e395b;
}

.status span {
  padding: 0 10px;
  border-right: 1px solid #eee;
}

.darstellung {
  display: flex;
  margin-left: auto;
}

.darstellung button {
  width: 21px;
  height: 23px;
  display: flex;
  align-items: center;
  justify-content: center;
}

.darstellung .an {
  width: 22px;
  background-color: #cce8f6;
  border: 1px solid #26a0da;
}

/* Taskleiste */
.taskleiste {
  flex: none;
  display: flex;
  height: 40px;
  background-color: #00b85f;
  color: #fff;
}

.taskleiste button {
  display: flex;
  align-items: center;
  justify-content: center;
}

.start {
  width: 48px;
}

.tasksuche {
  width: 344px;
  display: flex;
  align-items: center;
  background-color: #f2fbf7;
  border: 1px solid #bcc8c2;
  padding-left: 11px;
  font-size: 14px;
}

.tasksuche input {
  padding-left: 10px;
}

.tasksuche input::placeholder {
  color: #333;
}

.blumen {
  width: 79px;
  height: 39px;
}

.apps {
  display: flex;
  gap: 1px;
  margin-left: 1px;
}

.apps button {
  width: 48px;
}

.apps svg {
  width: 24px;
  height: 24px;
}

.apps .offen {
  background: linear-gradient(#a6f5cf, #a6f5cf) center bottom / 40px 2px no-repeat;
}

.apps .vorn {
  background-color: #00d66f;
  background-size: 48px 2px;
}

.ablagebereich {
  display: flex;
  margin-left: auto;
  padding-right: 4px;
}

.ablagebereich button {
  width: 25px;
}

.ablagebereich .wetter {
  width: auto;
  gap: 8px;
  padding-right: 8px;
  font-size: 13px;
}

.wetter svg {
  width: 24px;
  height: 24px;
}

.ablagebereich .sprache {
  width: 32px;
}

.ablagebereich .uhr {
  width: 72px;
  text-align: center;
  line-height: 18px;
}

.ablagebereich .info {
  position: relative;
  width: 44px;
  padding-right: 8px;
  border-right: 1px solid #66d49f;
}

.info b {
  position: absolute;
  left: 15px;
  top: 19px;
  width: 17px;
  height: 17px;
  border: 1px solid #8fdfb8;
  border-radius: 50%;
  background-color: #00b85f;
  line-height: 15px;
}
```

FILE: script.js
```js
const pfad = ["Dieser PC", "Lokaler Datenträger (C:)", "Users", "Claudia-Home", "AppData", "Roaming", "Thunderbird", "Profiles", "jmu35u36.default"];

// Icon, Text, Klasse
const baum = [
  ["ordner", "E-Mail-Anhänge", ""],
  ["ordner", "Music", ""],
  ["pc", "Dieser PC", "wurzel"],
  ["wuerfel", "3D-Objekte", ""],
  ["bild", "Bilder", ""],
  ["desktop", "Desktop", ""],
  ["dokument", "Dokumente", ""],
  ["download", "Downloads", ""],
  ["musik", "Musik", ""],
  ["video", "Videos", ""],
  ["laufwerk", "Lokaler Datenträger (C:)", ""],
  ["ordner", "AMD", "tief"],
  ["ordner", "Benutzer", "tief markiert"],
  ["ordner", "found.000", "tief"],
  ["ordner", "found.001", "tief"],
  ["ordner", "found.003", "tief"],
  ["ordner", "FragMich-DB2014", "tief"],
  ["ordner", "HP", "tief"],
  ["ordner", "inetpub", "tief"],
  ["ordner", "iSiteLogs", "tief"],
  ["ordner", "lide90vst641300ea24", "tief"],
  ["ordner", "Logs", "tief"],
  ["ordner", "MappedFiles", "tief"],
  ["ordner", "mediDOKV", "tief"],
  ["ordner", "MSI", "tief"],
  ["ordner", "PerfLogs", "tief"],
  ["ordner", "Programme", "tief"],
  ["ordner", "Programme (x86)", "tief"],
  ["ordner", "system.sav", "tief"],
  ["ordner", "temp", "tief"],
  ["ordner", "Windows", "tief"],
  ["ordner", "Windows.old(1)", "tief"],
  ["archiv", "VC_RED", "tief"],
  ["daten", "Daten (E:)", ""]
];

// Icon, Name, Datum, Typ, Größe, Klasse
const dateien = [
  ["ordner", "ImapMail", "20.07.2022 12:02", "Dateiordner", ""],
  ["ordner", "Mail", "20.07.2022 11:22", "Dateiordner", ""],
  ["ordner", "minidumps", "20.08.2021 20:03", "Dateiordner", ""],
  ["ordner", "saved-telemetry-pings", "21.07.2022 16:57", "Dateiordner", ""],
  ["ordner", "security_state", "16.09.2020 08:35", "Dateiordner", ""],
  ["ordner", "shader-cache", "20.07.2022 13:43", "Dateiordner", ""],
  ["ordner", "storage", "16.09.2020 22:58", "Dateiordner", ""],
  ["ordner", "webapps", "22.12.2018 11:14", "Dateiordner", ""],
  ["datei", "abook.mab.bak", "23.05.2020 13:55", "BAK-Datei", "3 KB", "gewaehlt fokus"],
  ["datei", "abook.sqlite", "19.07.2022 22:32", "SQLITE-Datei", "320 KB", "gewaehlt"],
  ["datei", "abook.v2.sqlite", "16.09.2020 23:15", "SQLITE-Datei", "320 KB", "gewaehlt"],
  ["datei", "abook-1.sqlite", "20.07.2022 13:27", "SQLITE-Datei", "256 KB", "gewaehlt"],
  ["json", "addons", "21.07.2022 12:52", "JSON File", "3 KB"],
  ["datei", "addons.sqlite", "08.07.2014 09:30", "SQLITE-Datei", "512 KB"],
  ["datei", "addonStartup.json.lz4", "20.07.2022 11:19", "LZ4-Datei", "3 KB"],
  ["text", "AlternateServices", "21.07.2022 16:57", "Textdokument", "3 KB"],
  ["datei", "blist.sqlite", "06.07.2022 13:04", "SQLITE-Datei", "512 KB"],
  ["datei", "blocklist", "15.09.2020 07:51", "XML-Dokument", "923 KB"],
  ["db", "cert8", "22.12.2018 22:59", "Data Base File", "160 KB"],
  ["db", "cert9", "25.10.2021 13:43", "Data Base File", "352 KB"],
  ["konfig", "compatibility", "21.07.2022 16:08", "Konfigurationsein...", "1 KB"],
  ["json", "containers", "20.07.2022 13:37", "JSON File", "1 KB"],
  ["datei", "content-prefs.sqlite", "23.06.2022 13:56", "SQLITE-Datei", "224 KB"],
  ["datei", "cookies.sqlite", "21.07.2022 16:57", "SQLITE-Datei", "512 KB"],
  ["json", "directoryTree", "21.07.2022 14:19", "JSON File", "1 KB"],
  ["text", "encrypted-openpgp-passphrase", "16.09.2020 08:35", "Textdokument", "1 KB"],
  ["datei", "enigmail.sqlite", "16.09.2020 08:35", "SQLITE-Datei", "96 KB"],
  ["json", "extension-preferences", "16.09.2020 08:35", "JSON File", "1 KB"],
  ["json", "extensions", "21.07.2022 12:48", "JSON File", "35 KB"],
  ["datei", "extensions.sqlite", "07.07.2014 23:08", "SQLITE-Datei", "448 KB"],
  ["datei", "favicons.sqlite", "20.07.2022 14:16", "SQLITE-Datei", "5.120 KB"],
  ["json", "folderTree", "21.07.2022 16:57", "JSON File", "3 KB"],
  ["datei", "formhistory.sqlite", "25.10.2021 20:28", "SQLITE-Datei", "256 KB"],
  ["datei", "global-messages-db.sqlite", "21.07.2022 16:57", "SQLITE-Datei", "63.488 KB"],
  ["json", "handlers", "20.07.2022 11:22", "JSON File", "4 KB"],
  ["datei", "history.mab.bak", "13.10.2014 08:39", "BAK-Datei", "5 KB"],
  ["datei", "history.sqlite", "25.10.2021 22:28", "SQLITE-Datei", "320 KB"],
  ["datei", "history.v2.sqlite", "16.09.2020 23:15", "SQLITE-Datei", "320 KB"],
  ["datei", "impab-1.mab.bak", "15.09.2020 18:06", "BAK-Datei", "204 KB"]
];

const icon = (name) => `<svg class="icon"><use href="#${name}"/></svg>`;

document.getElementById("pfad").innerHTML = pfad
  .map((ort) => `<li><svg width="8" height="8"><use href="#pfeil"/></svg><a href="#">${ort}</a></li>`)
  .join("");

document.getElementById("baum").innerHTML = baum
  .map(([bild, text, klasse]) => `<li class="${klasse}">${icon(bild)}${text}</li>`)
  .join("");

document.getElementById("dateien").innerHTML = dateien
  .map(([bild, name, datum, typ, groesse, klasse = ""]) => `
    <tr class="${klasse}">
      <td class="eintrag">${icon(bild)}${name}</td>
      <td>${datum}</td>
      <td>${typ}</td>
      <td class="menge">${groesse}</td>
    </tr>`)
  .join("");
```
